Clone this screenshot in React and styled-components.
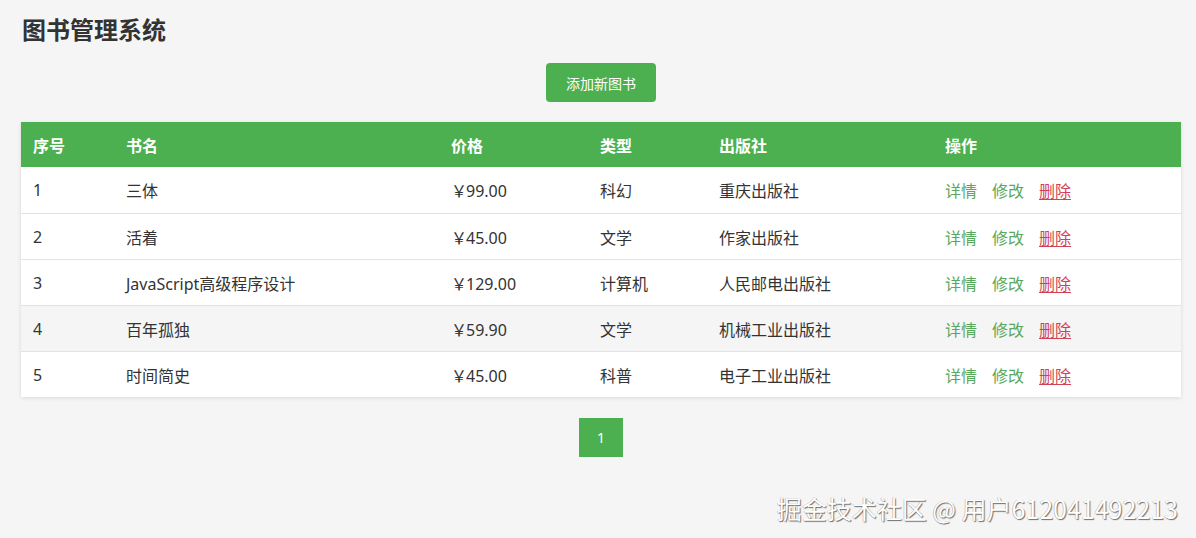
import React from "react";
import styled, { createGlobalStyle } from "styled-components";

const GlobalStyle = createGlobalStyle`
  html, body {
    margin: 0;
    padding: 0;
    background: #f5f5f5;
    font-family: "Noto Sans", "Noto Sans CJK SC", sans-serif;
    color: #333;
  }
  * { box-sizing: border-box; }
`;

const Page = styled.div`
  position: relative;
  min-height: 538px;
  padding: 12px 15px 20px 21px;
  display: flex;
  flex-direction: column;
  align-items: stretch;
`;

const Title = styled.h1`
  margin: 0 0 0 1px;
  font-family: "Noto Sans CJK SC", sans-serif;
  font-size: 24px;
  font-weight: 700;
  line-height: 34px;
  color: #333;
`;

const Toolbar = styled.div`
  display: flex;
  justify-content: center;
  margin-top: 17px;
`;

const Button = styled.button`
  height: 39px;
  padding: 0 20px;
  border: none;
  border-radius: 4px;
  background: #4caf50;
  color: #fff;
  font-family: "Noto Sans CJK SC", sans-serif;
  font-size: 14px;
  cursor: pointer;
`;

const Table = styled.table`
  margin-top: 20px;
  width: 100%;
  border-collapse: collapse;
  table-layout: fixed;
  background: #fff;
  box-shadow: 0 1px 4px rgba(0, 0, 0, 0.12);
`;

const HeadCell = styled.th`
  height: 45px;
  padding: 0 12px;
  background: #4caf50;
  color: #fff;
  text-align: left;
  font-family: "Noto Sans CJK SC", sans-serif;
  font-size: 16px;
  font-weight: 700;
`;

const Row = styled.tr`
  background: ${(p) => (p.$hover ? "#f5f5f5" : "#fff")};
  border-bottom: ${(p) => (p.$last ? "none" : "1px solid #e2e2e2")};
`;

const Cell = styled.td`
  height: 46px;
  padding: 1px 12px 0;
  font-size: 16px;
  color: #333;
  white-space: nowrap;
`;

const Actions = styled.div`
  display: flex;
  gap: 15px;
  font-family: "Noto Sans CJK SC", sans-serif;
`;

const ActionLink = styled.a`
  font-size: 16px;
  color: ${(p) => (p.$danger ? "#d23f57" : "#5aa85d")};
  text-decoration: ${(p) => (p.$danger ? "underline" : "none")};
  text-underline-offset: 2px;
  cursor: pointer;
`;

const Pagination = styled.div`
  display: flex;
  justify-content: center;
  margin-top: 21px;
`;

const PageButton = styled.button`
  width: 44px;
  height: 39px;
  border: none;
  background: #4caf50;
  color: #fff;
  font-family: "Noto Sans", sans-serif;
  font-size: 14px;
`;

const Watermark = styled.div`
  position: absolute;
  right: 18px;
  bottom: 14px;
  font-family: "Noto Sans CJK SC", sans-serif;
  font-size: 25px;
  line-height: 32px;
  color: #fff;
  text-shadow: 1px 1px 1px rgba(0, 0, 0, 0.55), -0.5px -0.5px 0.5px rgba(0, 0, 0, 0.35);
`;

const Price = styled.span`
  font-family: "Noto Sans CJK SC", sans-serif;
  margin-right: -1px;
`;

const books = [
  { id: 1, name: "三体", price: "99.00", type: "科幻", pub: "重庆出版社" },
  { id: 2, name: "活着", price: "45.00", type: "文学", pub: "作家出版社" },
  { id: 3, name: "JavaScript高级程序设计", price: "129.00", type: "计算机", pub: "人民邮电出版社" },
  { id: 4, name: "百年孤独", price: "59.90", type: "文学", pub: "机械工业出版社" },
  { id: 5, name: "时间简史", price: "45.00", type: "科普", pub: "电子工业出版社" },
];

const cols = [93, 325, 149, 119, 226, 248];

export default function App() {
  return (
    <>
      <GlobalStyle />
      <Page>
        <Title>图书管理系统</Title>
        <Toolbar>
          <Button>添加新图书</Button>
        </Toolbar>
        <Table>
          <colgroup>
            {cols.map((w, i) => (
              <col key={i} style={{ width: w }} />
            ))}
          </colgroup>
          <thead>
            <tr>
              <HeadCell>序号</HeadCell>
              <HeadCell>书名</HeadCell>
              <HeadCell>价格</HeadCell>
              <HeadCell>类型</HeadCell>
              <HeadCell>出版社</HeadCell>
              <HeadCell>操作</HeadCell>
            </tr>
          </thead>
          <tbody>
            {books.map((b, i) => (
              <Row key={b.id} $hover={b.id === 4} $last={i === books.length - 1}>
                <Cell>{b.id}</Cell>
                <Cell>{b.name}</Cell>
                <Cell>
                  <Price>￥</Price>
                  {b.price}
                </Cell>
                <Cell>{b.type}</Cell>
                <Cell>{b.pub}</Cell>
                <Cell>
                  <Actions>
                    <ActionLink>详情</ActionLink>
                    <ActionLink>修改</ActionLink>
                    <ActionLink $danger>删除</ActionLink>
                  </Actions>
                </Cell>
              </Row>
            ))}
          </tbody>
        </Table>
        <Pagination>
          <PageButton>1</PageButton>
        </Pagination>
        <Watermark>掘金技术社区 @ 用户612041492213</Watermark>
      </Page>
    </>
  );
}
